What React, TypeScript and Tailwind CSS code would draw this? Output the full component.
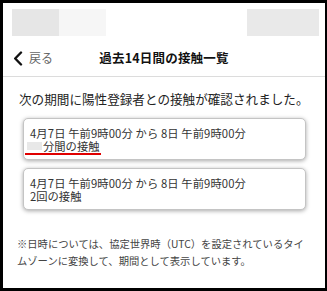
import React from "react";

// contact history list (past 14 days)
const contacts = [
  { id: 1, period: "4月7日 午前9時00分 から 8日 午前9時00分", detail: "分間の接触", redacted: true },
  { id: 2, period: "4月7日 午前9時00分 から 8日 午前9時00分", detail: "2回の接触", redacted: false },
];

function ChevronLeft() {
  return (
    <svg width="10" height="15" viewBox="0 0 10 15" fill="none">
      <path d="M8 1.5 L2.2 7.5 L8 13.5" stroke="#111" strokeWidth="2.4" strokeLinecap="round" strokeLinejoin="round" />
    </svg>
  );
}

export default function App() {
  return (
    <div
      className="w-[327px] h-[291px] overflow-hidden bg-white border-l-[3px] border-t-[3px] border-r-2 border-b-[3px] border-black flex flex-col"
      style={{ fontFamily: '"Noto Sans CJK JP", "Noto Sans", sans-serif' }}
    >
      {/* status bar (redacted) */}
      <div className="h-[37px] flex pt-[6px] pl-[9px] pr-[6px]">
        <div className="w-[47px] h-[27px] bg-[#e6e6e6]" />
        <div className="w-[47px] h-[27px] bg-[#f6f6f6]" />
        <div className="ml-auto w-[72px] h-[27px] bg-[#e9e9e9]" />
      </div>

      {/* nav */}
      <div className="h-[37px] grid grid-cols-[1fr_auto_1fr] items-center border-b border-[#dcdcdc]">
        <div className="flex items-center pl-[10px] gap-[6px]">
          <ChevronLeft />
          <span className="text-[12px] text-[#666] leading-none">戻る</span>
        </div>
        <div className="text-[12.5px] font-semibold text-[#111] leading-none tracking-[0.2px]">過去14日間の接触一覧</div>
        <div />
      </div>

      {/* body */}
      <div className="flex flex-col">
        <p className="pl-[16px] pt-[13px] text-[12.6px] leading-[18px] text-[#222] whitespace-nowrap">
          次の期間に陽性登録者との接触が確認されました。
        </p>

        <div className="flex flex-col gap-[8px] mt-[10px] ml-[20px] w-[283px]">
          {contacts.map((c) => (
            <div
              key={c.id}
              className="h-[42px] rounded-[5px] border border-[#c4c4c4] bg-white shadow-[0_1px_4px_rgba(0,0,0,0.35)] pl-[6px] pt-[7px] text-[11.3px] leading-[14px] text-[#333]"
            >
              <div className="whitespace-nowrap tracking-[0.1px]">{c.period}</div>
              {c.redacted ? (
                <div className="flex -mt-[1px]">
                  <span className="-ml-[5px] pl-[2px] pr-[1px] flex items-center border-b-2 border-[#e00000]">
                    <span className="w-[15px] h-[8px] bg-[#e8e8e8] mr-[1px]" />
                    <span>{c.detail}</span>
                  </span>
                </div>
              ) : (
                <div className="-mt-[1px]">{c.detail}</div>
              )}
            </div>
          ))}
        </div>

        <p className="pl-[14px] mt-[25px] text-[10.3px] leading-[17px] text-[#444] whitespace-nowrap">
          ※日時については、協定世界時（UTC）を設定されているタイ
          <br />
          ムゾーンに変換して、期間として表示しています。
        </p>
      </div>
    </div>
  );
}
